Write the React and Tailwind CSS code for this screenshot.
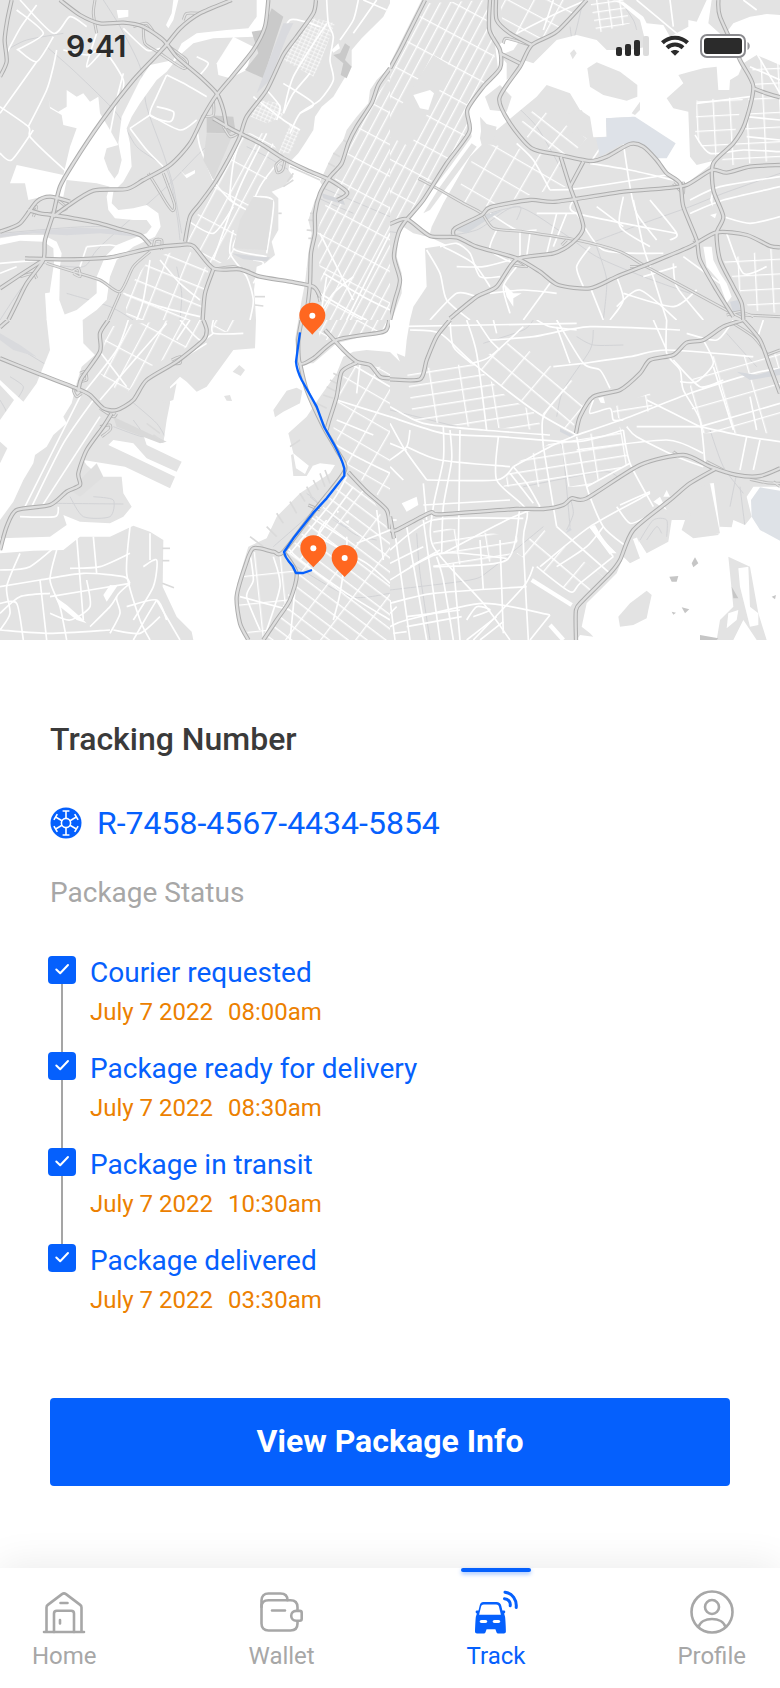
import React from 'react';

const LAND = '#e3e3e3';

// Turns "x,y x,y ..." into a smooth path through the points.
function curve(points) {
  const p = points.split(' ').map((pair) => pair.split(',').map(Number));
  let d = `M${p[0][0]} ${p[0][1]}`;
  for (let i = 0; i < p.length - 1; i += 1) {
    const a = p[i - 1] || p[i];
    const b = p[i];
    const c = p[i + 1];
    const e = p[i + 2] || c;
    d += ` C${b[0] + (c[0] - a[0]) / 8} ${b[1] + (c[1] - a[1]) / 8} ${c[0] - (e[0] - b[0]) / 8} ${c[1] - (e[1] - b[1]) / 8} ${c[0]} ${c[1]}`;
  }
  return d;
}

const TILES = [
  {
    id: 'nw', x: 0, y: 0,
    grids: [
      ['avenues', '965,880 950,700 990,570 1050,440 1120,300 1170,230 1170,960 965,960'],
      ['blocks', '590,650 640,545 720,400 800,400 850,480 770,570 740,640 700,770 640,800 560,735'],
      ['fine', '925,50 1005,70 960,190 940,230 850,180'],
      ['fine', '780,300 840,310 850,350 800,370 740,345'],
      ['fine', '870,370 900,390 870,460 835,460'],
      ['wide', '450,775 560,745 625,810 600,960 380,960 375,880'],
    ],
    water: [
      '1170,10 1150,50 1110,90 1085,115 1055,150 1055,200 1030,240 1000,290 965,320 945,350 940,390 915,430 895,460 870,485 865,510 880,530 850,560 815,575 835,595 835,690 815,725 825,765 795,790 770,800 762,870 765,905 768,960 895,960 905,900 915,850 925,760 935,700 925,660 945,600 970,560 960,545 985,490 1000,460 1030,420 1040,390 1070,350 1105,310 1110,270 1130,240 1170,200',
      '770,0 808,0 805,60 790,90 760,110 640,115 580,130 540,165 500,215 470,240 420,310 395,350 380,385 390,430 395,500 370,545 340,575 335,610 355,630 400,625 440,615 475,640 482,680 465,710 400,740 350,780 330,830 320,900 290,930 248,960 140,960 135,880 165,875 170,925 190,945 230,930 260,905 290,880 290,830 315,770 350,735 400,715 440,700 455,680 440,660 400,660 345,655 325,630 320,590 330,555 355,520 365,480 355,430 365,350 390,300 420,240 450,195 520,180 545,130 590,100 680,90 745,85 770,50',
      '145,290 150,320 175,335 200,320 200,270 230,290 250,280 270,305 295,290 300,340 330,390 355,435 320,445 312,475 325,510 350,545 330,560 290,550 200,540 190,590 150,585 85,600 75,550 30,550 50,495 190,525 210,440 230,385 190,375 185,345 150,325',
      '0,715 60,705 130,705 170,725 185,760 180,800 178,900 200,960 140,960 150,870 162,790 160,745 130,725 60,722 0,735',
      '350,30 385,30 385,50 355,55',
      '535,0 520,60 505,85 498,75 515,40 520,0',
      '650,190 700,110 760,140 740,210 690,235 655,225',
      '540,510 555,525 585,510 585,520 560,535',
      '995,150 1015,130 1020,145 1000,158',
    ],
    patches: [
      ['#cacaca', '815,25 850,50 830,110 790,235 735,210 775,160 755,95 790,90'],
      ['#d9dade', '850,70 880,70 860,110 810,240 770,280 800,200'],
      ['#cccccc', '620,345 700,350 705,385 690,400 620,398'],
      ['#dadada', '620,400 700,400 640,540 610,480'],
      ['#c9c9c9', '1035,130 1050,140 1035,180 1055,200 1040,235 1022,225 1030,190 1000,165 1020,160'],
      ['#dfdfdf', '760,590 820,600 800,750 700,745 720,660'],
      ['#d8d9dd', '0,703 130,690 240,683 400,690 430,712 300,700 200,706 100,700 0,712'],
      ['#d6d8dc', '695,760 770,770 810,772 800,784 730,778'],
      ['#d4d6da', '965,580 1030,600 1035,615 970,595'],
    ],
    rails: [
      '140,140 230,220 350,340 410,440 500,510 530,640 540,720', '310,0 360,80 420,200 440,320 490,460 520,560 545,700',
      '0,960 60,870 130,790', '20,150 80,120 190,100', '740,440 800,470 900,530 960,560 1170,650', '130,790 250,800 300,740 500,560 620,440 690,420',
      '540,960 545,880 530,800', '900,530 950,590 1060,640', '785,798 920,805', '0,700 300,680 480,730', '200,880 330,920 400,960',
    ],
    streets: [
      '60,0 160,100 210,50 260,80', '50,30 130,100 50,150', '110,15 60,85 20,160', '55,150 110,185 160,110', '110,185 50,270 0,340', '0,320 85,380 90,410 150,470 200,515',
      '85,380 140,270 160,200 170,150', '0,460 35,480 100,390', '190,150 260,165 310,150 370,240 360,300', '370,85 440,150 480,145', '500,225 560,255 620,290', '500,225 470,290 450,345 510,365 520,335 470,320', '390,385 450,345', '390,385 440,450 490,500', '450,345 540,390 590,360', '590,170 625,190 600,225',
      '590,380 600,440 640,540', '640,545 690,600 740,630', '830,155 870,60 960,80', '980,0 985,70 1000,110 990,180 1000,240 960,300 900,340 870,400', '1075,0 1060,60 1020,120', '850,340 880,280 930,220', '850,250 940,310 900,340', '760,290 850,360 900,390', '800,270 840,320 830,360',
      '980,70 880,230 850,340', '720,420 700,490 690,590 710,615', '800,400 720,560 640,780', '850,470 780,560 700,750', '760,590 820,605 800,760', '740,660 700,745 800,770', '560,660 640,700 700,620', '700,690 690,760 740,830 760,900 750,960', '760,780 790,790 760,850',
      '370,880 480,920 600,950', '450,780 430,900 410,960', '480,780 540,850 600,900', '260,740 330,735 370,745', '260,740 240,800', '0,790 60,785 130,780', '0,820 50,800', '1090,0 1160,30', '1060,100 1130,0',
      '960,880 1060,940 1100,960', '970,820 1090,890 1170,930', '960,700 1060,900', '980,830 960,960', '1040,960 1170,700',
      '370,220 350,300 330,400', '290,100 260,200 310,150', '950,960 1000,880 1060,830',
    ],
    highways: [
      '35,0 22,60 14,120 20,185 0,230', '180,0 240,45 300,70 370,68 430,80 490,120 530,170 600,230 650,280 670,330 680,385',
      '695,0 600,40 540,85 490,145 400,240 300,370 220,490 180,560 160,640 135,720 130,780 80,850 50,910 25,960',
      '805,0 795,80 760,150 700,225 650,285 610,350 570,430 510,495 430,540 380,567 280,572 200,620 160,650',
      '948,0 940,40 890,110 850,165 800,270 740,350 715,420 650,540 600,610 570,650 555,725',
      '0,695 60,670 110,605 150,590 210,605', '85,630 120,640 160,645 220,655 290,668 350,685 420,705 450,735',
      '75,775 200,778 330,772 450,745 540,735 580,738 640,805 720,808 780,830 870,845 940,860 960,890',
      '640,808 615,880 608,960', '0,865 60,825 130,780', '1170,205 1135,255 1115,310 1070,380 1045,430 1025,490 990,530 960,580 945,640 945,700 933,760 930,850 920,930 905,960',
      '640,355 700,390 780,430 850,475 920,510 990,540 1040,575 1032,590 1012,600',
    ],
    ramps: [
      '140,790 220,815 300,840 360,875 400,800 450,755', '360,880 325,960', '285,0 280,40 290,100', '445,520 470,560 500,610 518,632 524,615 505,560 490,520',
      '850,475 828,495 832,518 848,510 856,475', '430,80 435,130 480,160 550,205 560,180 500,135', '460,745 465,720 485,720 485,750', '80,640 110,620 100,650', '160,590 200,625 150,640', '605,350 640,345 640,300',
      '640,808 700,800 750,815', '670,380 690,410 715,400', '930,860 950,870 960,905', '550,60 560,40 600,40', '460,95 440,70 400,80', '215,815 235,805 240,830 220,820', '60,830 100,820 110,835',
    ],
    piers: ['960,540 870,500', '985,490 1005,500', '1000,460 1020,470', '1030,420 1045,430', '930,640 945,640', '925,660 945,662', '920,690 942,692', '925,715 940,715', '880,520 862,545', '850,560 880,540', '835,640 845,640', '765,890 795,890', '765,915 790,918'],
  },
  {
    id: 'ne', x: 1170, y: 0,
    grids: [
      ['avenues', '110,10 290,0 300,90 320,200 230,320 232,400 170,480 50,650 0,660 0,230'],
      ['queens', '440,320 590,415 540,470 430,430 380,380'],
      ['avenues2', '270,430 420,450 510,475 530,560 480,570 280,620 190,600'],
      ['wide2', '330,0 580,0 500,90 430,130 340,90'],
      ['fine2', '600,0 700,0 720,70 620,100'],
      ['blocks2', '920,300 1060,290 1030,420 960,480 915,410'],
      ['blocks2', '1090,190 1170,160 1170,480 980,500 1060,400'],
      ['blocks2', '1000,780 1170,740 1170,940 1080,930'],
    ],
    water: [
      '0,0 95,0 60,70 0,190',
      '310,90 320,140 345,120 390,120 370,150 330,165 350,190 350,240 370,220 400,180 430,190 500,120 560,105 620,120 650,150 720,150 770,140 750,60 690,10 665,0 700,5 760,50 770,70 820,75 840,110 895,80 895,60 920,65 950,0 965,0 955,70 1000,110 1030,70 1080,50 1130,42 1170,45 1170,195 1100,165 1060,190 1045,225 1020,240 1018,270 985,270 980,200 940,205 900,215 865,225 880,250 830,295 850,325 895,335 900,470 920,495 980,480 930,520 890,550 850,540 820,510 790,475 830,470 852,435 730,350 648,355 650,410 610,412 600,350 570,330 540,280 470,255 440,290 380,340 320,390 275,380 270,415 275,435 240,470 200,540 160,610 125,680 120,700 60,660 110,590 180,500 245,410 235,330 285,260 325,215',
      '40,680 70,700 120,712 170,735 105,745 110,860 70,920 60,960 5,960 35,880 35,820 20,770 25,710',
      '940,740 965,740 970,780 990,820 1010,850 1025,890 1010,910 985,840 950,800',
      '960,600 968,570 968,620', '960,645 980,640 975,655',
      '70,285 120,270 132,280 115,330 90,325', '340,850 370,880 395,880 370,895 370,920 350,890',
      '15,380 35,375 65,400 40,405 20,400',
    ],
    islands: [
      '592,205 620,187 690,215 742,255 742,290 710,302 640,285 600,260', '270,350 275,420 310,420 320,380 290,372', '285,290 330,255 365,290 350,335 300,330',
      '725,340 750,305 750,330 735,345', '540,160 552,148 560,160 548,178', '245,430 260,440 120,630 100,640 150,560', '525,345 575,330 600,380 590,410 550,400',
    ],
    patches: [
      ['#dee2e8', '648,355 735,350 857,430 830,475 790,475 755,440 720,428 690,435 630,470 618,415 650,410'],
      ['#d5d8dc', '195,690 270,650 340,630 290,660 230,700'],
      [LAND, '130,165 185,200 60,440 0,410 0,370'],
      ['#ffffff', '70,285 120,270 132,280 115,330 90,325'],
      ['#d5d8de', '1020,905 1045,900 1055,950 1030,940'],
    ],
    rails: [
      '0,695 130,710 260,690 380,620 520,700 620,770 760,830 900,880', '360,300 440,380 510,500', '540,80 550,120 580,0', '690,0 730,60 740,90', '600,730 760,670 900,620 1000,580 1170,520', '640,960 650,840 620,740', '195,690 300,640 390,620 380,660',
    ],
    streets: [
      '480,570 570,565 860,520', '600,490 720,510 850,540', '480,570 430,480 380,430', '700,430 720,560 740,640 800,720', '550,600 560,640 860,700', '780,600 860,700 840,720', '660,400 600,490', '730,600 760,740 780,800', '900,600 990,560 1170,530', '900,640 1000,600 1170,560',
      '1000,650 1080,670 1170,650', '1010,700 1060,820 1130,800', '600,860 640,960', '480,850 400,960', '680,830 700,900 660,960', '700,880 850,920 920,870', '780,800 830,960', '600,740 560,800 580,860', '380,800 340,860 360,940', '300,880 400,870 500,880', '110,750 150,820 170,900 240,960', '160,740 250,790 300,860',
      '150,740 200,730 240,760 270,830 330,830', '260,890 200,880 120,960', '390,690 390,770', '320,690 300,750 370,790', '420,700 410,770', '500,640 470,760', '530,640 490,740', '300,640 380,690 440,690', '440,640 560,640', '700,590 690,680 780,740', '620,620 700,680', '1060,0 1100,30',
      '740,0 860,100', '840,0 850,80', '490,0 460,90', '380,100 500,40 590,0', '1080,200 1170,240', '920,310 1080,290', '915,405 960,460 1060,450 1170,455', '1100,160 1170,280', '1070,350 1170,360', '1070,410 1170,420',
      '560,640 640,750 820,760', '850,790 860,860 940,960', '880,770 990,850', '760,830 860,800', '680,920 750,870 860,960', '200,800 280,800 360,780',
    ],
    highways: [
      '105,0 60,90 30,150 0,205', '300,0 298,90 330,150 330,205 280,260 232,330 238,395 170,490 100,600 45,665 25,700 12,770 30,840 15,900 0,960',
      '318,0 320,60 360,100 425,135', '590,0 500,95 425,135 390,200 328,295 360,370 425,445 510,465 600,483 650,470 720,432 760,440 800,480 830,520 870,550 880,620 920,720 930,780 980,870 1030,950',
      '330,160 390,190', '985,0 990,50 1050,180 1090,260 1065,370 1030,430 970,490 970,570 1000,650 980,700 990,780 1030,860 1055,910 1060,960', '1090,265 1130,280 1170,292',
      '1170,495 1080,500 1010,518 965,510 890,555 820,565 700,575 500,605 420,600 300,622 275,645 195,685 190,705',
      '0,672 50,657 120,708 200,712 260,740 380,775 450,815 505,855 600,865 680,830 780,790 900,740 980,697 1070,705 1140,738 1170,742',
      '512,470 540,560 580,680 545,730 490,760 380,778 320,860 260,890 180,955', '580,485 540,560',
    ],
    ramps: ['85,535 150,570 220,610 275,640 310,685 400,695 560,720 690,755 760,795 880,860 1000,925 1060,955', '1060,945 1170,950', '850,550 880,580 880,545', '720,800 760,800', '380,778 410,800 370,795', '515,735 530,720', '340,130 350,115 420,135', '910,720 925,730', '1010,945 1050,935 1090,950'],
    piers: [],
  },
  {
    id: 'sw', x: 0, y: 960,
    grids: [
      ['avenues', '950,0 1170,0 1170,30 1010,60 960,60'],
      ['avenues2', '1040,140 1170,140 1170,560 1040,440 1000,330 1010,230'],
      ['brooklyn', '1040,470 860,700 890,770 800,960 1170,960 1170,640 1120,540'],
      ['wide3', '745,695 850,700 885,760 860,850 790,960 750,960 715,860'],
      ['blocks', '320,20 520,0 610,0 600,60 450,140 370,230 300,160'],
      ['blocks', '640,0 740,0 730,30 640,40'],
    ],
    water: [
      '140,0 150,90 110,190 70,245 0,180 0,195 42,240 0,300 0,365 22,385 0,430 0,600 40,545 70,480 100,430 105,405 140,380 160,345 200,310 190,290 215,250 230,190 245,140 285,105 250,70 248,0',
      '768,0 765,85 700,90 620,200 590,215 560,185 540,170 510,200 510,250 500,300 490,370 430,345 440,375 545,425 530,455 440,415 400,370 340,360 325,375 400,410 525,470 510,505 375,440 250,420 260,435 300,470 365,470 370,520 395,560 370,590 330,610 240,605 190,585 200,615 150,650 0,655 0,700 100,692 190,690 240,650 330,650 400,617 450,635 490,660 488,800 530,890 575,935 580,960 745,960 712,880 712,790 745,680 800,655 830,590 900,520 990,460 1005,435 960,430 930,440 880,400 865,340 920,290 960,230 1010,160 1030,110 1060,95 1100,90 1170,96 1170,20 1150,40 1080,52 1010,70 940,130 895,130 885,60 895,0',
      '310,825 330,795 352,798 320,845', '1010,570 1018,575 1012,580', '1035,605 1048,600 1045,612', '165,830 200,855 240,890 260,910 230,900 180,860',
    ],
    islands: ['820,270 860,212 890,203 907,212 900,250 850,275 825,292', '672,228 690,225 696,243 680,242', '698,155 718,135 735,150 722,168', '873,405 880,402 888,445 915,462 930,430 938,438 920,468 880,468', '480,230 530,190 520,240 490,250'],
    patches: [['#d9dadd', '0,40 60,75 110,110 40,90 0,60'], ['#d9d9d9', '340,290 500,365 480,370 350,320'], ['#d6d8dc', '990,595 1050,625 1030,620'], ['#dfdfdf', '210,510 290,430 310,470 240,530']],
    rails: ['0,50 230,190', '390,240 470,310 500,360', '340,320 430,350 400,300', '160,550 370,552', '210,530 250,590 330,590 340,540 280,530', '890,740 1050,830 1170,820', '820,680 950,560 920,520', '0,240 20,280 0,310', '30,170 70,200 50,240', '930,530 1060,640 1130,660'],
    streets: [
      '245,220 75,560', '280,240 190,370 95,560', '300,290 125,560', '60,590 165,590 175,560', '300,95 380,200', '385,0 350,90 250,220', '500,10 420,100 300,240', '540,0 600,60 640,40', '640,0 640,40 730,40', '570,0 530,60', '620,70 540,120',
      '0,800 120,780 250,760 370,770 390,790', '150,830 390,790', '120,780 140,960', '170,690 150,780 180,860 200,960', '230,650 250,900', '390,620 380,760 420,900 450,960', '330,940 360,880 350,830 390,790', '0,880 60,830 150,820', '0,930 150,940 330,930', '430,740 470,720 460,800 400,900',
      '0,750 90,740 200,650', '60,700 20,800 30,880 0,930', '280,650 290,760', '390,700 300,740 210,745', '0,850 50,850 70,960', '150,880 210,900 270,860 260,780', '340,930 420,940 480,890', '380,860 470,840 500,900', '400,960 440,890 470,840', '270,920 330,860 350,830', '450,640 450,720',
      '470,840 540,960', '1050,130 1170,200', '1010,300 1120,345', '1010,240 1170,290', '1080,130 1070,220', '1000,370 1070,410 1170,460', '1130,570 1150,720', '1070,670 1170,630', '1040,650 1040,680 1020,820 1000,900', '980,600 960,650 1100,730 1170,790', '930,590 1040,660',
      '860,680 900,720 1040,820 1170,900', '890,760 870,960', '720,830 870,870', '750,700 760,780 740,830 780,930', '820,710 840,800 790,960', '1040,470 1000,540 870,700', '1060,500 900,720',
    ],
    highways: [
      '25,0 0,22', '0,115 100,155 230,205 270,225 310,265 350,270 400,240 440,180 530,125 610,60 620,30 610,0', '325,0 300,40 300,95 245,175 235,215', '335,280 310,320 260,390 235,460 240,495 200,515 150,555 50,570 20,620 0,690',
      '1168,0 1160,28 1140,38 1010,60 940,115 900,130 895,60 905,0', '975,30 1030,90 1070,125 1110,135 1140,170 1170,175', '1070,128 1025,155 1010,230 985,310 980,330',
      '900,130 920,210 970,320 1010,390 1035,450 960,550 850,695 820,695 760,685 735,740 710,830 720,910 745,960', '850,695 890,760 870,840 830,900 790,960', '1045,457 1100,515 1160,570 1170,625',
    ],
    ramps: ['240,210 220,210 230,230 245,220', '240,160 255,155 260,180 235,185', '300,320 330,315 330,330 305,350', '515,120 540,110 540,130 515,130', '300,265 340,290 350,280', '925,555 960,570'],
    piers: ['480,340 440,310', '490,365 460,345', '487,685 510,685', '487,722 508,722', '487,790 522,803', '990,180 1020,195', '980,200 1010,215', '970,225 1000,235', '950,250 980,265', '870,380 900,360', '920,500 935,530', '900,520 915,545', '870,545 890,580', '830,580 850,610', '800,620 830,650', '750,650 790,680', '975,450 990,490', '960,460 975,500', '940,480 955,510', '1000,160 1020,170'],
  },
  {
    id: 'se', x: 1170, y: 960,
    grids: [
      ['queens2', '370,60 600,220 540,340 350,210 250,130'],
      ['slant', '50,150 250,130 350,230 430,275 460,330 240,320 70,300'],
      ['slant', '480,370 690,320 720,430 590,500 340,500 360,440'],
      ['slant', '660,265 780,220 790,270 690,300'],
      ['slant', '130,620 390,650 350,720 130,740'],
      ['queens2', '450,620 640,770 570,840 440,740 380,700'],
      ['wide4', '930,110 1170,100 1170,340 940,340 890,230'],
    ],
    water: [
      '0,0 60,0 50,60 45,110 20,100 30,125 0,96',
      '570,945 610,950 600,940 575,920 590,850 640,800 680,760 700,710 720,730 750,715 745,660 770,700 835,665 845,600 885,600 875,630 910,655 985,645 990,620 1025,622 1030,600 1065,615 1085,590 1070,530 1090,500 1170,500 1170,960 560,960',
      '600,620 615,615 640,660 680,700 660,700', '35,550 80,530 85,555 50,575', '625,235 640,230 645,250 632,248', '820,530 830,510 840,530', '790,545 810,530 830,570',
    ],
    islands: ['685,890 720,850 770,812 785,825 775,870 770,895 730,915 690,920', '1015,710 1080,740 1105,880 1130,960 1100,960 1060,900 1030,960 980,960 990,900 1030,860', '960,490 990,640 910,650 880,620 905,600 900,580 860,560 850,530'],
    patches: [
      ['#dee2e7', '1083,540 1110,502 1170,512 1170,662 1110,630 1085,590'], ['#ffffff', '1045,745 1075,740 1080,860 1105,880 1105,915 1080,920 1050,800'], ['#ffffff', '1015,880 1045,870 1040,900 1010,925'],
      ['#c6c6c6', '905,730 915,712 925,730 910,742'], ['#c6c6c6', '838,770 865,768 860,785 845,785'], ['#c6c6c6', '1025,800 1045,835 1030,835'], ['#c6c6c6', '1145,830 1158,825 1155,838'], ['#c6c6c6', '845,875 858,878 850,884'], ['#c6c6c6', '875,862 898,868 885,880'], ['#c6c6c6', '930,945 985,955 980,960 930,960'],
      ['#d5d8dd', '1040,155 1100,165 1170,145 1170,165 1080,180'], ['#d5d8dd', '510,325 550,345 540,350 510,335'], ['#d5d8dd', '527,640 540,620 545,630'],
    ],
    rails: ['540,620 520,400 510,370', '500,290 520,210 600,90 610,30', '560,50 610,75 700,75', '80,640 90,760 120,960', '0,810 240,780 300,750 460,620', '1050,500 1075,680 1140,960', '960,330 1000,440 1060,520', '0,270 200,320', '1010,40 1100,140', '400,500 640,455 690,480', '1040,460 1020,560', '280,70 400,30 430,0', '540,530 550,580 530,630', '750,660 790,600 830,600 830,650', '770,660 800,620 815,640'],
    streets: [
      '60,30 150,40 250,130 430,270 560,345', '180,0 190,80 245,130', '230,0 260,100 290,330', '260,0 300,60 330,90', '300,60 430,50 600,20 870,30', '245,130 300,110 400,20', '440,0 480,20 560,30', '500,20 540,130', '500,0 580,130 630,150 660,205', '580,130 720,110 830,90 1090,110', '490,140 580,130', '790,0 830,90', '830,0 830,100 870,150 880,210 930,300 945,430',
      '560,345 720,290 900,220 1090,160 1170,145', '560,345 480,380 370,440', '370,440 410,490 450,560', '360,460 430,550', '0,290 160,340 330,350 560,365 700,330', '0,260 100,310 280,330 480,345', '0,310 45,390 110,480', '0,420 50,380 60,330', '50,380 150,420 360,440', '0,370 50,390', '160,320 160,420 130,560 130,680 280,850 360,960', '180,330 185,420 160,560 155,700', '210,330 205,690',
      '325,350 320,480 410,570 400,660 415,960', '110,480 320,480 370,440', '100,490 110,600', '460,380 500,620', '460,380 460,290 530,200', '560,350 590,500 640,620 710,680', '100,555 360,540', '700,330 720,430 790,560', '710,320 740,350 860,410 940,440', '560,390 830,360 940,400', '640,620 590,680 500,740', '590,500 720,430', '780,520 600,620 450,740', '680,560 720,610 770,590', '690,555 780,515',
      '160,700 350,600 450,560', '0,780 150,700 350,715', '0,850 130,820 410,800', '0,920 50,900 280,850 480,885', '130,740 350,720 390,560', '330,660 340,940', '270,660 280,810', '250,960 400,800 430,740', '15,640 60,960', '50,620 110,960', '100,600 150,960', '190,730 210,960', '140,710 160,780 190,960', '0,690 130,600 400,595',
      '0,840 15,960', '50,890 210,870', '50,920 215,890', '0,730 100,680', '230,960 320,890', '270,960 340,905', '10,940 50,935', '60,740 150,690', '0,880 20,860',
      '440,740 540,815 570,790 670,710', '500,620 660,760', '600,620 670,710', '480,885 420,960', '930,320 1070,350 1170,365', '740,320 930,320', '930,320 1170,250', '970,140 1030,330', '1070,350 1050,450', '1110,360 1090,450', '770,240 930,320', '1030,0 980,60 890,40', '940,60 970,130 920,185 870,185', '1120,0 1100,60',
      '250,890 300,870 260,860 230,900', '0,20 560,10', '610,240 600,280 660,265 670,300 700,300', '310,0 320,40', '0,600 20,600', '850,120 930,200 1000,180', '1080,230 1100,330', '0,440 40,480',
    ],
    channels: ['425,780 545,855', '480,915 520,960', '965,490 985,640', '605,620 665,700', '735,655 755,710'],
    highways: [
      '180,0 140,50 110,120 90,178 0,178', '1060,0 1000,20 940,60 890,68 850,105 780,120 750,160 690,210 610,230 570,290 558,340', '1060,0 1110,60 1140,140 1170,220',
      '0,630 20,630 120,578 150,583 380,567 460,567 520,555 545,535 590,535 750,435 880,405 960,440 1040,465 1110,468 1170,445', '975,447 900,490 840,540 730,630 690,720 660,760 580,840 558,870 558,960', '0,590 12,655',
    ],
    ramps: ['1080,478 1130,488 1170,490', '1130,105 1170,90', '1030,10 1090,50 1130,100', '950,425 1000,450', '850,395 870,410', '1150,485 1170,500'],
    piers: [],
  },
];

const PATTERNS = [
  ['avenues', 28, 27, 84], ['avenues2', 30, 62, 74], ['blocks', 28, 44, 96], ['fine', 24, 13, 11], ['wide', 22, 58, 52],
  ['queens', 38, 72, 40], ['wide2', 28, 76, 56], ['fine2', -8, 34, 24], ['blocks2', -3, 50, 44], ['wide3', -6, 76, 84],
  ['brooklyn', 37, 84, 34], ['queens2', 40, 76, 58], ['slant', -9, 90, 34], ['wide4', -16, 90, 84],
];

function Tile({ tile }) {
  return (
    <svg x={tile.x} y={tile.y} width="1170" height="960" fill="none" strokeLinejoin="round">
      <rect width="1170" height="960" fill={LAND} />
      {tile.rails.map((p) => <path key={p} d={curve(p)} stroke="#d2d3d6" strokeWidth="3" />)}
      {tile.grids.map(([name, p]) => <polygon key={p} points={p} fill={`url(#${name})`} />)}
      <g stroke="#fff" strokeWidth="5">
        {tile.streets.map((p) => <path key={p} d={curve(p)} />)}
      </g>
      {(tile.channels || []).map((p) => <path key={p} d={curve(p)} stroke="#fff" strokeWidth="13" />)}
      {tile.water.map((p) => <polygon key={p} points={p} fill="#fff" />)}
      {(tile.islands || []).map((p) => <polygon key={p} points={p} fill={LAND} />)}
      {tile.patches.map(([fill, p]) => <polygon key={p} points={p} fill={fill} />)}
      {tile.piers.map((p) => <path key={p} d={curve(p)} stroke="#dadada" strokeWidth="5" />)}
      {tile.ramps.map((p) => <path key={p} d={curve(p)} stroke="#b9b9b9" strokeWidth="9" />)}
      {tile.ramps.map((p) => <path key={p} d={curve(p)} stroke="#e3e3e3" strokeWidth="4" />)}
      {tile.highways.map((p) => <path key={p} d={curve(p)} stroke="#aeaeae" strokeWidth="13" />)}
      {tile.highways.map((p) => <path key={p} d={curve(p)} stroke="#dedede" strokeWidth="7" />)}
    </svg>
  );
}

function Pin({ x, y }) {
  return (
    <g transform={`translate(${x} ${y})`}>
      <path d="M39 0C17 0 0 17 0 38c0 25 22 38 39 58 17-20 39-33 39-58C78 17 61 0 39 0Z" fill="#ff6720" />
      <circle cx="39" cy="39" r="9" fill="#fff" />
    </g>
  );
}

function RouteMap() {
  return (
    <svg className="block h-auto w-full" viewBox="0 0 2340 1920" role="img" aria-label="Delivery route map">
      <defs>
        {PATTERNS.map(([id, angle, w, h]) => (
          <pattern key={id} id={id} width={w} height={h} patternUnits="userSpaceOnUse" patternTransform={`rotate(${angle})`}>
            <path d={`M0 2H${w}M2 0V${h}`} stroke="#fff" strokeWidth={w < 20 ? 2 : 4} />
          </pattern>
        ))}
      </defs>
      {TILES.map((tile) => <Tile key={tile.id} tile={tile} />)}
      <path
        d="M900 997 888 1085Q890 1110 905 1140L950 1220 972 1280 1003 1335Q1025 1375 1033 1405V1427L980 1495 940 1538 880 1615 852 1656Q856 1672 866 1684L878 1698 888 1719H910L936 1710"
        fill="none" stroke="#0560fd" strokeWidth="7" strokeLinejoin="round"
      />
      <Pin x={898} y={908} />
      <Pin x={901} y={1606} />
      <Pin x={995} y={1635} />
    </svg>
  );
}

function StatusBar() {
  return (
    <div className="absolute inset-x-0 top-0 flex items-center justify-between pt-7 pr-[30px] pl-[66px] text-[#2b2b2b]">
      <span className="font-[Inter,sans-serif] text-[30px] leading-9 font-semibold">9:41</span>
      <div className="flex items-center gap-[11px]">
        <svg width="34" height="24" viewBox="0 0 34 24" fill="currentColor" aria-label="Signal">
          <rect y="13" width="6" height="9" rx="2" />
          <rect x="9" y="10" width="6" height="12" rx="2" />
          <rect x="18" y="6" width="6" height="16" rx="2" />
          <rect x="27" y="2" width="6" height="20" rx="2" fill="#dcdcdc" />
        </svg>
        <svg width="28" height="24" viewBox="0 0 28 24" fill="none" stroke="currentColor" strokeWidth="4" aria-label="Wi-Fi">
          <path d="M1.4 8.8C8.4 2 19.600 2 26.600 8.800" />
          <path d="M6 13.800C10.500 9.500 17.500 9.500 22 13.800" />
          <path d="m14 21.800-4.300-4.300c2.400-2 6.200-2 8.600 0Z" fill="currentColor" stroke="none" />
        </svg>
        <svg width="50" height="24" viewBox="0 0 50 24" aria-label="Battery">
          <rect x="1" y="1" width="44" height="22" rx="6" fill="#fff" stroke="#8a8a8e" strokeWidth="2" />
          <rect x="4" y="4" width="38" height="16" rx="3" fill="currentColor" />
          <path d="M47.500 8c3 1.500 3 6.500 0 8Z" fill="#9a9a9e" />
        </svg>
      </div>
    </div>
  );
}

function WheelIcon() {
  return (
    <svg className="size-8 shrink-0" viewBox="0 0 32 32" aria-hidden="true">
      <circle cx="16" cy="16" r="15.500" fill="#0560fd" />
      <g stroke="#fff" strokeWidth="1.600" fill="none">
        <circle cx="16" cy="16" r="4.600" />
        {[0, 60, 120, 180, 240, 300].map((a) => (
          <path key={a} d="M16 11.400V4M12.600 4h6.800" transform={`rotate(${a} 16 16)`} />
        ))}
      </g>
    </svg>
  );
}

const STEPS = [
  ['Courier requested', 'July 7 2022', '08:00am'],
  ['Package ready for delivery', 'July 7 2022', '08:30am'],
  ['Package in transit', 'July 7 2022', '10:30am'],
  ['Package delivered', 'July 7 2022', '03:30am'],
];

function Step({ index, step: [title, date, time] }) {
  const id = `step-${index}`;
  const last = index === STEPS.length - 1;
  return (
    <li className="flex min-h-24 gap-[14px]">
      <div className="flex flex-col items-center">
        <span className="relative flex size-7">
          <input id={id} type="checkbox" defaultChecked className="size-7 appearance-none rounded bg-[#0560fd]" />
          <svg className="pointer-events-none absolute inset-0 size-7" viewBox="0 0 28 28" fill="none" stroke="#fff" strokeWidth="2" strokeLinecap="round" strokeLinejoin="round" aria-hidden="true">
            <path d="m8.300 13.500 3.900 3.800 7.800-8.300" />
          </svg>
        </span>
        {!last && <span className="w-[2px] flex-1 bg-[#a5a5a5]" />}
      </div>
      <div className="flex flex-col gap-[6px]">
        <label htmlFor={id} className="text-[28px] leading-[34px] text-[#0560fd]">{title}</label>
        <p className="flex gap-[15px] text-2xl leading-8 text-[#ec8000]">
          <span>{date}</span>
          <time>{time}</time>
        </p>
      </div>
    </li>
  );
}

const stroke = { fill: 'none', stroke: 'currentColor', strokeWidth: 2.6, strokeLinecap: 'round', strokeLinejoin: 'round' };

function HomeIcon() {
  return (
    <svg className="size-11" viewBox="0 0 44 44" {...stroke} aria-hidden="true">
      <path d="M2 42h40M4.500 42V17.500c0-1 .5-2 1.300-2.600L20 4.100c1.200-.9 2.800-.9 4 0l14.200 10.800c.8.600 1.300 1.600 1.300 2.600V42" />
      <path d="M12 42V23.500c0-1.600 1.200-2.800 2.800-2.800h14.400c1.600 0 2.800 1.200 2.800 2.800V42M18 30v3.500M18.500 13h7" />
    </svg>
  );
}

function WalletIcon() {
  return (
    <svg className="size-11" viewBox="0 0 44 44" {...stroke} aria-hidden="true">
      <path d="M1.500 17V10.500C1.500 6 4 3.500 8.500 3.500h12c4.500 0 7 2.500 7 6.800" />
      <path d="M1.500 17c0-4.500 2.500-6.700 7-6.700h22c4.500 0 7 2.500 7 7v3.500M37.500 32v1.500c0 4.500-2.500 7-7 7h-22c-4.500 0-7-2.500-7-7V17" />
      <path d="M41.700 22.800v6c0 1-.8 1.900-1.900 1.900h-3.600c-2.800 0-5-1.900-5-4.900s2.200-4.900 5-4.900h3.600c1.100 0 1.900.8 1.900 1.900ZM12 20.500h13" />
    </svg>
  );
}

function TrackIcon() {
  return (
    <svg className="size-11" viewBox="0 0 44 44" aria-hidden="true">
      <path
        fill="currentColor" fillRule="evenodd"
        d="M9.500 12h13c2.400 0 4.200 1.400 4.700 3.600l1.200 4.900h1.500c1.700 0 1.900 2.600.2 3l.9 3c.4 1.500 1 13.500.9 15 0 1.200-.9 2-2 2h-5.200c-1.100 0-2-.6-2.300-1.600l-1-2.700H12.600l-1 2.700c-.3 1-1.200 1.600-2.300 1.600H3c-1.200 0-2-.8-2-2 0-1.500.5-13.500.9-15l1-3c-1.800-.4-1.600-3 .1-3h1.500l1.200-4.900C6.300 13.400 7.100 12 9.500 12Zm.3 2.600c-1.500 0-2.400.7-2.700 2l-2 8.200h21.800l-2-8.200c-.3-1.300-1.200-2-2.700-2H9.800ZM7.500 30c-2.400 0-2.400 3 0 3h4c2.400 0 2.400-3 0-3h-4Zm13 0c-2.400 0-2.400 3 0 3h4c2.400 0 2.400-3 0-3h-4Z"
      />
      <path {...stroke} strokeWidth="3" d="M31 2.200c7.500.9 12 7.500 11.200 15.300M30.500 8.700c4 .4 6.300 3.500 5.700 7" />
    </svg>
  );
}

function ProfileIcon() {
  return (
    <svg className="size-11" viewBox="0 0 44 44" {...stroke} aria-hidden="true">
      <circle cx="22" cy="22" r="20.500" />
      <circle cx="22" cy="17" r="7" />
      <path d="M8.500 37c1.500-5 7-8 13.500-8s12 3 13.500 8" />
    </svg>
  );
}

const TABS = [
  ['Home', HomeIcon],
  ['Wallet', WalletIcon],
  ['Track', TrackIcon],
  ['Profile', ProfileIcon],
];

export default function App() {
  return (
    <div className="flex min-h-screen flex-col bg-white font-[Roboto,sans-serif]">
      <header className="relative">
        <RouteMap />
        <StatusBar />
      </header>
      <main className="flex flex-col px-[50px] pt-[79px] pb-20">
        <h1 className="text-[32px] leading-10 font-medium text-[#3a3a3a]">Tracking Number</h1>
        <p className="mt-11 flex items-center gap-[15px] text-[32px] leading-10 text-[#0560fd]">
          <WheelIcon />
          R-7458-4567-4434-5854
        </p>
        <h2 className="mt-[34px] text-[28px] leading-8 text-[#a7a7a7]">Package Status</h2>
        <ol className="mt-[47px] -ml-[2px]">
          {STEPS.map((step, i) => <Step key={step[0]} index={i} step={step} />)}
        </ol>
        <button type="button" className="mt-[58px] h-22 rounded bg-[#0560fd] pb-[2px] text-[32px] leading-10 font-bold text-white">
          View Package Info
        </button>
      </main>
      <nav className="mt-auto flex h-30 justify-between bg-white pr-[34px] pl-8 shadow-[0_-4px_36px_rgba(0,0,0,0.08)]">
        {TABS.map(([name, Icon]) => {
          const active = name === 'Track';
          return (
            <a
              key={name}
              href={`#${name.toLowerCase()}`}
              aria-current={active ? 'page' : undefined}
              className={`relative flex flex-col items-center gap-2 pt-[22px] text-2xl leading-7 ${active ? 'text-[#0560fd]' : 'text-[#a7a7a7]'}`}
            >
              {active && <span className="absolute top-0 left-1/2 h-1 w-[70px] -translate-x-1/2 rounded-sm bg-[#0560fd] shadow-[0_2px_4px_rgba(5,96,253,0.4)]" />}
              <Icon />
              {name}
            </a>
          );
        })}
      </nav>
    </div>
  );
}
